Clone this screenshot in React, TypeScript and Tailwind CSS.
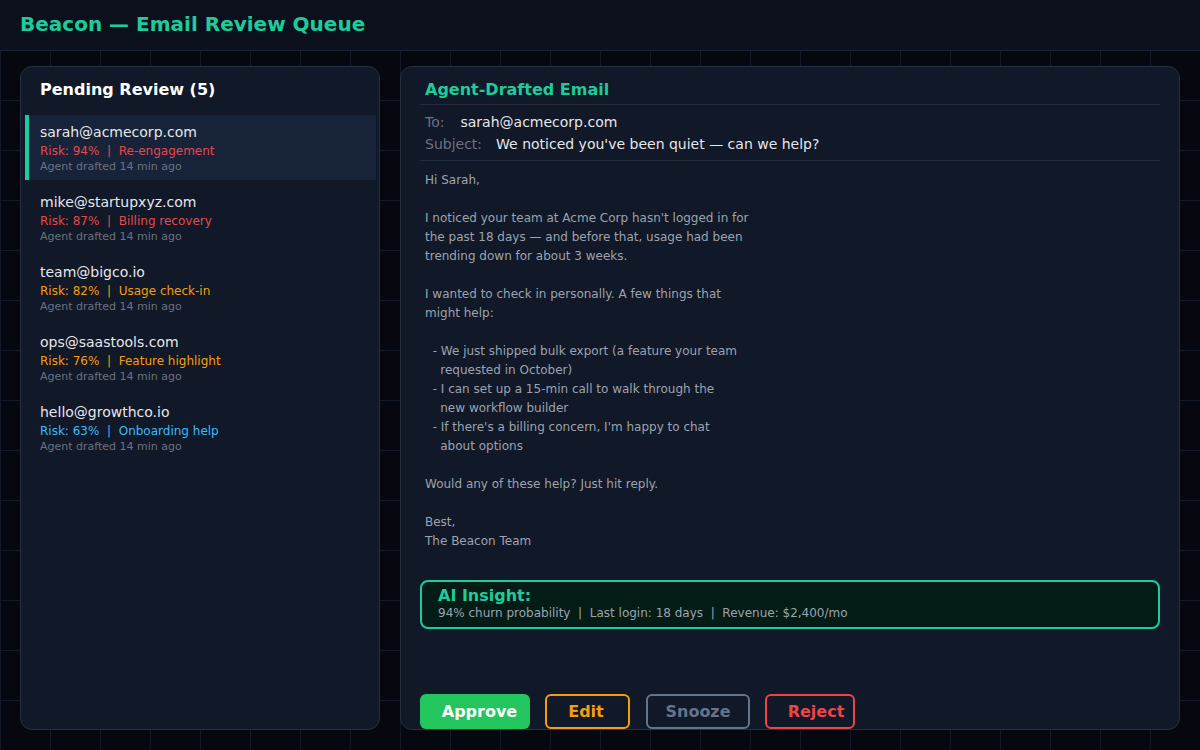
import React from 'react';

const queue = [
  { email: 'sarah@acmecorp.com', risk: 94, reason: 'Re-engagement', color: 'text-[#e5484d]', active: true },
  { email: 'mike@startupxyz.com', risk: 87, reason: 'Billing recovery', color: 'text-[#e5484d]' },
  { email: 'team@bigco.io', risk: 82, reason: 'Usage check-in', color: 'text-[#f59e0b]' },
  { email: 'ops@saastools.com', risk: 76, reason: 'Feature highlight', color: 'text-[#f59e0b]' },
  { email: 'hello@growthco.io', risk: 63, reason: 'Onboarding help', color: 'text-[#38bdf8]' },
];

const body = `Hi Sarah,

I noticed your team at Acme Corp hasn't logged in for
the past 18 days — and before that, usage had been
trending down for about 3 weeks.

I wanted to check in personally. A few things that
might help:

  - We just shipped bulk export (a feature your team
    requested in October)
  - I can set up a 15-min call to walk through the
    new workflow builder
  - If there's a billing concern, I'm happy to chat
    about options

Would any of these help? Just hit reply.

Best,
The Beacon Team`;

export default function App() {
  return (
    <div className="h-[750px] w-[1200px] overflow-hidden bg-[#05080f] bg-[linear-gradient(to_right,#131a27_1px,transparent_1px),linear-gradient(to_bottom,#131a27_1px,transparent_1px)] bg-[size:50px_50px] font-['DejaVu_Sans',sans-serif] flex flex-col">
      <header className="h-[51px] shrink-0 bg-[#0b101c] border-b border-[#1c2333] flex items-center px-5">
        <h1 className="text-[20px] font-bold text-[#1ecb9b] leading-none -mt-[3px]">Beacon — Email Review Queue</h1>
      </header>

      <main className="flex-1 flex gap-5 px-5 pt-[15px] pb-5">
        <aside className="w-[360px] shrink-0 rounded-xl bg-[#111827] border border-[#263042] flex flex-col pl-1 pr-[3px]">
          <h2 className="text-[16px] font-bold text-white leading-[19px] pl-[15px] pt-[13px] pb-[16px]">Pending Review (5)</h2>
          <div className="flex flex-col gap-[5px]">
            {queue.map((q) => (
              <QueueItem key={q.email} {...q} />
            ))}
          </div>
        </aside>

        <section className="flex-1 rounded-xl bg-[#111827] border border-[#263042] flex flex-col px-[19px]">
          <div className="pl-[5px] pt-[13px] pb-[5px] border-b border-[#232c3d]">
            <h2 className="text-[16px] font-bold text-[#1ecb9b] leading-[19px]">Agent-Drafted Email</h2>
          </div>
          <div className="pl-[5px] pt-[6px] pb-[5px] border-b border-[#232c3d] text-[14px] leading-[22px]">
            <div>
              <span className="text-[#6b7280]">To:</span>
              <span className="text-[#e5e7eb] ml-4">sarah@acmecorp.com</span>
            </div>
            <div>
              <span className="text-[#6b7280]">Subject:</span>
              <span className="text-[#e5e7eb] ml-[14px]">We noticed you've been quiet — can we help?</span>
            </div>
          </div>
          <p className="pl-[5px] pt-[10px] text-[12px] leading-[19px] text-[#9ca3af] whitespace-pre">{body}</p>

          <div className="mt-[29px] rounded-lg border-2 border-[#1ecb9b] bg-[#031c16] px-4 pt-[4px] pb-[6px]">
            <div className="text-[16px] font-bold text-[#1ecb9b] leading-[19px]">AI Insight:</div>
            <div className="text-[12px] text-[#9ca3af] leading-[16px] whitespace-pre">94% churn probability  |  Last login: 18 days  |  Revenue: $2,400/mo</div>
          </div>

          <div className="mt-auto flex">
            <button className="w-[110px] h-[35px] rounded-md bg-[#22c55e] text-white text-[16px] font-bold pl-[9px]">Approve</button>
            <button className="ml-[15px] w-[85px] h-[35px] rounded-md border-2 border-[#f59e0b] text-[#f59e0b] text-[16px] font-bold pr-[3px]">Edit</button>
            <button className="ml-[16px] w-[104px] h-[35px] rounded-md border-2 border-[#64748b] text-[#64748b] text-[16px] font-bold">Snooze</button>
            <button className="ml-[15px] w-[90px] h-[35px] rounded-md border-2 border-[#ef4444] text-[#ef4444] text-[16px] font-bold pl-[12px]">Reject</button>
          </div>
        </section>
      </main>
    </div>
  );
}

function QueueItem({
  email,
  risk,
  reason,
  color,
  active,
}: {
  email: string;
  risk: number;
  reason: string;
  color: string;
  active?: boolean;
}) {
  return (
    <div
      className={
        active
          ? 'h-[65px] bg-[#172338] border-l-4 border-[#1ecb9b] pl-[11px] pt-[7px]'
          : 'h-[65px] border-l-4 border-transparent pl-[11px] pt-[7px]'
      }
    >
      <div className="text-[14px] leading-[20px] text-[#e5e7eb]">{email}</div>
      <div className={`text-[12px] leading-[19px] whitespace-pre ${color}`}>{`Risk: ${risk}%  |  ${reason}`}</div>
      <div className="text-[11px] leading-[11px] text-[#6b7280]">Agent drafted 14 min ago</div>
    </div>
  );
}
